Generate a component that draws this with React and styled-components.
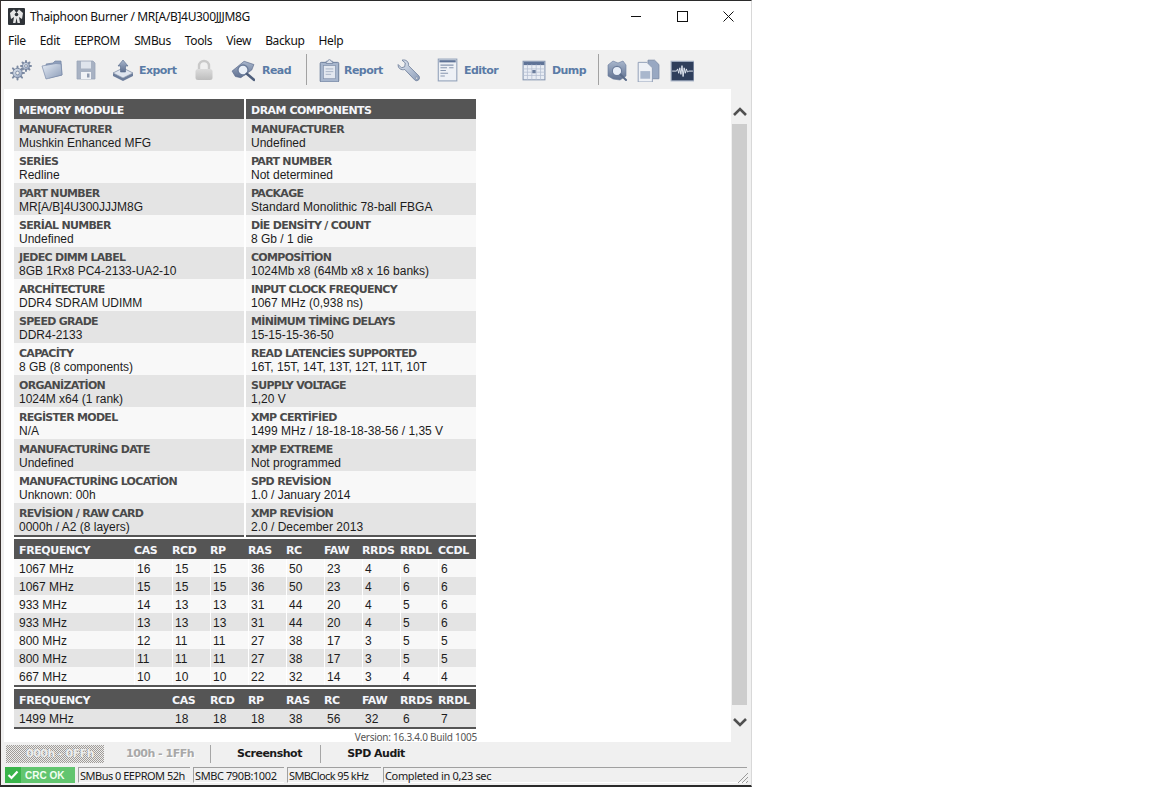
import React from "react";
import styled, { createGlobalStyle } from "styled-components";

const GlobalStyle = createGlobalStyle`
  html, body {
    margin: 0;
    padding: 0;
    background: #fff;
  }
  * {
    box-sizing: border-box;
  }
`;

const Window = styled.div`
  width: 752px;
  height: 787px;
  display: flex;
  flex-direction: column;
  background: #f0f0f0;
  border-top: 1px solid #2b2b2b;
  border-left: 1px solid #3a3230;
  border-right: 1px solid #d8d8d8;
  border-bottom: 2px solid #2b2b2b;
  overflow: hidden;
  font-family: "Liberation Sans", Arial, sans-serif;
  color: #1a1a1a;
`;

const TitleBar = styled.div`
  height: 30px;
  flex: none;
  display: flex;
  align-items: center;
  background: #fff;
  padding-left: 7px;
`;

const Title = styled.span`
  margin-left: 5px;
  font: 12px "Noto Sans", "Open Sans", sans-serif;
  letter-spacing: -0.34px;
  color: #111;
  white-space: nowrap;
`;

const WindowButtons = styled.div`
  margin-left: auto;
  display: flex;
`;

const WindowButton = styled.div`
  width: 46px;
  height: 30px;
  display: flex;
  align-items: center;
  justify-content: center;
`;

const MenuBar = styled.div`
  height: 19px;
  flex: none;
  display: flex;
  align-items: center;
  gap: 14px;
  padding-left: 7px;
  background: #fff;
  font: 12px "Noto Sans", "Open Sans", sans-serif;
  letter-spacing: -0.35px;
  color: #111;
`;

const Toolbar = styled.div`
  height: 39px;
  flex: none;
  display: flex;
  align-items: center;
  background: #f0f0f0;
`;

const ToolSlot = styled.div`
  width: ${(p) => p.$w}px;
  height: 39px;
  flex: none;
  display: flex;
  align-items: center;
  padding-left: ${(p) => p.$pad || 0}px;
`;

const ToolLabel = styled.span`
  margin: 2px 0 0 ${(p) => p.$gap || 6}px;
  font: bold 11px "DejaVu Sans", sans-serif;
  letter-spacing: -0.55px;
  color: #5a7ba6;
`;

const ToolDivider = styled.div`
  width: 1px;
  height: 31px;
  flex: none;
  background: #a2a2a2;
`;

const Middle = styled.div`
  flex: 1;
  min-height: 0;
  display: flex;
  padding-left: 3px;
`;

const Content = styled.div`
  width: 727px;
  flex: none;
  background: #fff;
  padding: 10px 0 0 10px;
  display: flex;
  flex-direction: column;
`;

const Modules = styled.div`
  width: 462px;
  display: grid;
  grid-template-columns: 230px 230px;
  column-gap: 2px;
`;

const InfoHead = styled.div`
  height: 20px;
  display: flex;
  align-items: center;
  padding: 2px 0 0 5px;
  background: #555;
  color: #f4f6fb;
  font: bold 11px "DejaVu Sans", sans-serif;
  letter-spacing: -0.5px;
`;

const InfoCell = styled.div`
  height: 32px;
  padding: 4px 0 0 5px;
  background: ${(p) => (p.$odd ? "#e4e4e4" : "#f8f8f8")};
`;

const InfoLabel = styled.div`
  height: 13px;
  font: bold 11px/14px "DejaVu Sans", sans-serif;
  letter-spacing: -0.7px;
  color: #4a4a4a;
  white-space: nowrap;
`;

const InfoValue = styled.div`
  height: 14px;
  font: 12px/14px "Liberation Sans", Arial, sans-serif;
  color: #1c1c1c;
  white-space: nowrap;
`;

const ColumnRule = styled.div`
  height: 2px;
  background: #555;
`;

const Timings = styled.div`
  width: 462px;
  margin-top: ${(p) => p.$top || 0}px;
`;

const TimingRow = styled.div`
  display: grid;
  grid-template-columns: ${(p) => p.$first}px repeat(${(p) => p.$count}, 38px);
  height: ${(p) => (p.$head ? 20 : 18)}px;
  background: ${(p) => (p.$head ? "#555" : p.$odd ? "#e4e4e4" : "#f8f8f8")};
`;

const HeadCell = styled.div`
  display: flex;
  align-items: center;
  padding: 2px 0 0 ${(p) => (p.$first ? 5 : 0)}px;
  color: #f4f6fb;
  font: bold 11px "DejaVu Sans", sans-serif;
  letter-spacing: -0.38px;
  white-space: nowrap;
`;

const TimingCell = styled.div`
  display: flex;
  align-items: center;
  padding: 2px 0 0 ${(p) => (p.$first ? 5 : p.$lined ? 2 : 3)}px;
  font-size: 12px;
  color: #1c1c1c;
  border-left: ${(p) => (p.$lined ? "1px solid #fff" : "none")};
`;

const Version = styled.div`
  width: 463px;
  height: 13px;
  margin-top: 2px;
  text-align: right;
  font: 10px/13px "Noto Sans", sans-serif;
  letter-spacing: -0.25px;
  color: #555;
  white-space: nowrap;
`;

const ScrollTrack = styled.div`
  width: 20px;
  flex: none;
  display: flex;
  flex-direction: column;
  align-items: center;
  background: #f0f0f0;
`;

const ScrollArrow = styled.div`
  height: ${(p) => p.$h}px;
  padding-top: ${(p) => p.$top || 0}px;
  margin-left: -2px;
  display: flex;
  align-items: center;
  justify-content: center;
  flex: none;
`;

const ScrollThumb = styled.div`
  width: 15px;
  height: 581px;
  flex: none;
  margin-left: -4px;
  background: #cdcdcd;
`;

const TabBar = styled.div`
  height: 23px;
  flex: none;
  display: flex;
  align-items: center;
  padding-left: 5px;
  background: #f0f0f0;
`;

const Tab = styled.div`
  width: ${(p) => p.$w}px;
  height: 18px;
  flex: none;
  display: flex;
  align-items: center;
  justify-content: center;
  padding-left: ${(p) => p.$pad || 0}px;
  font: bold 11px "DejaVu Sans", sans-serif;
  letter-spacing: -0.5px;
  color: ${(p) => (p.$off ? "#a8a8a8" : "#1a1a1a")};
  ${(p) =>
    p.$active &&
    `background: repeating-conic-gradient(#a09c98 0 25%, #ececec 0 50%) 0 0 / 2px 2px;
     color: #ededed;
     text-shadow: 0 0 1px #8e8e8e;`}
  ${(p) => p.$off && !p.$active && "text-shadow: 1px 1px 0 #fff;"}
  ${(p) => p.$rule && "border-right: 1px solid #a6a6a6;"}
`;

const StatusBar = styled.div`
  height: 20px;
  flex: none;
  display: flex;
  align-items: center;
  padding-left: 4px;
  background: #f0f0f0;
`;

const CrcBadge = styled.div`
  width: 70px;
  height: 16px;
  flex: none;
  display: flex;
  background: #62c56f;
  color: #f2fff2;
  font: bold 10px "Liberation Sans", sans-serif;
`;

const CrcCheck = styled.div`
  width: 16px;
  flex: none;
  display: flex;
  align-items: center;
  justify-content: center;
  background: #39b44a;
`;

const CrcText = styled.div`
  display: flex;
  align-items: center;
  padding-left: 4px;
`;

const StatusPanel = styled.div`
  position: relative;
  width: ${(p) => p.$w}px;
  height: 16px;
  flex: none;
  margin-left: ${(p) => p.$gap}px;
  padding-left: 1px;
  display: flex;
  align-items: center;
  border-top: 1px solid #a0a0a0;
  border-left: 1px solid #a0a0a0;
  border-bottom: 1px solid #fff;
  font: 11px "Noto Sans", "Open Sans", sans-serif;
  letter-spacing: ${(p) => p.$track}px;
  color: #1a1a1a;
  white-space: nowrap;
`;

const Grip = styled.svg`
  position: absolute;
  right: -1px;
  bottom: -1px;
`;

/* toolbar drawings */
const Defs = () => (
  <svg width="0" height="0" style={{ position: "absolute" }}>
    <defs>
      <linearGradient id="steel" x1="0" y1="0" x2="1" y2="1">
        <stop offset="0" stopColor="#e6ecf5" />
        <stop offset="1" stopColor="#8b9cb8" />
      </linearGradient>
      <linearGradient id="steelDark" x1="0" y1="0" x2="0" y2="1">
        <stop offset="0" stopColor="#a9b7cd" />
        <stop offset="1" stopColor="#5f7090" />
      </linearGradient>
      <linearGradient id="lockBody" x1="0" y1="0" x2="0" y2="1">
        <stop offset="0" stopColor="#dcdcdc" />
        <stop offset="1" stopColor="#bdbdbd" />
      </linearGradient>
    </defs>
  </svg>
);

const Icon = ({ size = 22, children }) => (
  <svg width={size} height={size} viewBox="0 0 22 22">
    {children}
  </svg>
);

const gearPath = (cx, cy, r) => {
  const out = [];
  for (let i = 0; i < 8; i++) {
    const a = (i * Math.PI) / 4;
    const x1 = cx + Math.cos(a) * (r * 0.72);
    const y1 = cy + Math.sin(a) * (r * 0.72);
    const x2 = cx + Math.cos(a) * r;
    const y2 = cy + Math.sin(a) * r;
    out.push(`M${x1.toFixed(1)} ${y1.toFixed(1)}L${x2.toFixed(1)} ${y2.toFixed(1)}`);
  }
  return out.join("");
};

const Gear = ({ cx, cy, r }) => (
  <g>
    <path d={gearPath(cx, cy, r)} stroke="#7d8ba3" strokeWidth="2" strokeLinecap="round" />
    <circle cx={cx} cy={cy} r={r * 0.72} fill="url(#steel)" stroke="#6f7e98" strokeWidth="0.8" />
    <circle cx={cx} cy={cy} r={r * 0.28} fill="#f0f0f0" stroke="#6f7e98" strokeWidth="0.7" />
  </g>
);

const GearsIcon = () => (
  <Icon>
    <Gear cx={7.5} cy={14} r={6.5} />
    <Gear cx={16} cy={7} r={5} />
  </Icon>
);

const FolderIcon = () => (
  <Icon>
    <path d="M5 5 L12 4 L14 2 L20 2 L21 16 L8 19 Z" fill="#8e9fbc" stroke="#7384a2" strokeWidth="0.7" />
    <path d="M1 7 L15 4.5 L20 5 L21 16 L5 20 Z" fill="url(#steel)" stroke="#7c8cab" strokeWidth="0.7" />
  </Icon>
);

const DiskIcon = () => (
  <Icon>
    <path d="M2 2 H18 L20 4 V20 H2 Z" fill="#a8b2c3" stroke="#9aa5b8" strokeWidth="0.8" />
    <rect x="6" y="2.5" width="10" height="7" fill="#dfe4ec" />
    <rect x="6" y="13" width="10" height="7" fill="#f0f2f6" />
    <rect x="12" y="14.5" width="2.5" height="4" fill="#8f9bb0" />
  </Icon>
);

const ExportIcon = () => (
  <Icon>
    <path d="M1 14 L11 19 L21 14 L21 17 L11 22 L1 17 Z" fill="#6d7e9c" />
    <path d="M1 14 L11 9 L21 14 L11 19 Z" fill="#dfe5ef" stroke="#75859f" strokeWidth="0.7" />
    <path d="M11 1 L16 7 H13.5 V13 H8.5 V7 H6 Z" fill="url(#steelDark)" stroke="#566a8c" strokeWidth="0.6" />
  </Icon>
);

const LockIcon = () => (
  <Icon>
    <path d="M6 11 V7 a5 5 0 0 1 10 0 V11" fill="none" stroke="#c9c9c9" strokeWidth="2.4" />
    <rect x="2.5" y="10" width="17" height="11" rx="2.5" fill="url(#lockBody)" />
  </Icon>
);

const ReadIcon = () => (
  <Icon size={24}>
    <path d="M1 12 L12 3 L21 6 L19 11 L9 18 L4 17 Z" fill="url(#steelDark)" stroke="#59698a" strokeWidth="0.6" />
    <circle cx="11" cy="11" r="4.6" fill="#eaf0f8" stroke="#6a7b9a" strokeWidth="1.2" />
    <path d="M14.5 14.5 L21 20" stroke="#4f5f7c" strokeWidth="2.4" strokeLinecap="round" />
  </Icon>
);

const ReportIcon = () => (
  <Icon size={24}>
    <rect x="2" y="4" width="17" height="18" rx="1" fill="#a7b6cd" stroke="#6c7d9b" strokeWidth="0.9" />
    <rect x="5" y="7" width="11" height="12" fill="#e3e8f0" stroke="#8190aa" strokeWidth="0.6" />
    <path d="M7.5 5 V3 H9 a1.5 1.5 0 0 1 3 0 H13.5 V5 Z" fill="#dfe5ee" stroke="#6c7d9b" strokeWidth="0.7" />
    <path d="M7 10 H14 M7 12.5 H14 M7 15 H12" stroke="#a3afc3" strokeWidth="0.8" />
  </Icon>
);

const WrenchIcon = () => (
  <Icon size={24}>
    <path
      d="M2 6 L5 9 L8 8 L8.5 4.5 L5.5 2 C9 1 12 3.5 11.5 7 L21 16.5 C22 18 21.5 20 20 20.5 C19 21 18 21 17 20 L8 10.5 C5 11.5 1.5 9.5 2 6 Z"
      fill="url(#steel)"
      stroke="#6f7f9b"
      strokeWidth="0.8"
    />
    <circle cx="19" cy="18.5" r="1" fill="#f0f0f0" stroke="#6f7f9b" strokeWidth="0.5" />
  </Icon>
);

const EditorIcon = () => (
  <Icon size={24}>
    <rect x="3" y="1" width="17" height="20" fill="#eef1f6" stroke="#93a2ba" strokeWidth="1" />
    <rect x="4" y="2" width="15" height="2" fill="#5f7397" />
    <path d="M5 6.5 H17 M5 9 H11 M13 9 H17 M5 11.5 H10 M5 14 H12 M5 16.5 H9" stroke="#8897b0" strokeWidth="1" />
  </Icon>
);

const DumpIcon = () => (
  <Icon size={24}>
    <rect x="1" y="3" width="20" height="17" fill="#e9edf4" stroke="#8a99b3" strokeWidth="1" />
    <rect x="1.5" y="3.5" width="19" height="3" fill="#5f7397" />
    <path d="M1 10 H21 M1 13 H21 M1 16 H21 M5 6 V20 M9 6 V20 M13 6 V20 M17 6 V20" stroke="#b4bfd1" strokeWidth="0.7" />
    <rect x="9.5" y="11" width="3" height="3" fill="#6a7c9c" />
  </Icon>
);

const ScanIcon = () => (
  <Icon>
    <path d="M2 6 L7 2 L12 4 L17 2 L20 6 V17 L14 21 L7 20 L2 17 Z" fill="url(#steelDark)" stroke="#66789a" strokeWidth="0.6" />
    <circle cx="11" cy="12" r="4.6" fill="#e8eef8" stroke="#6a7b9a" strokeWidth="1.1" />
    <path d="M14.5 15.5 L20 21" stroke="#5b6c8a" strokeWidth="2" strokeLinecap="round" />
  </Icon>
);

const CopyIcon = () => (
  <Icon size={24}>
    <path d="M11 2 H17 L21 6 V19 H11 Z" fill="#98a8c2" stroke="#7b8ba7" strokeWidth="0.8" />
    <path d="M2 4 H10 L15 9 V22 H2 Z" fill="#eef1f6" stroke="#8796b0" strokeWidth="0.8" />
    <rect x="4" y="12" width="9" height="7" fill="#a9b7cd" />
  </Icon>
);

const WaveIcon = () => (
  <Icon size={24}>
    <rect x="1" y="3" width="21" height="18" fill="#2f3f5c" stroke="#a9b5c8" strokeWidth="1" />
    <path d="M2 12 H6 L7 10 L8 14 L9 9 L10 15 L11 7 L12 17 L13 9 L14 14 L15 10 L16 13 L17 12 H21" stroke="#dfe6f0" strokeWidth="0.9" fill="none" />
  </Icon>
);

const AppLogo = () => (
  <svg width="17" height="17" viewBox="0 0 17 17">
    <rect width="17" height="17" rx="1" fill="#2e3338" />
    <path d="M2 5 L6 1.5 L8.5 5 L11 1.5 L15 5 L14 11 L11 9 L12 15 H9.5 L8.5 10 L7.5 15 H5 L6 9 L3 11 Z" fill="#e6e6e6" />
    <circle cx="8.5" cy="6.5" r="1.8" fill="#2e3338" />
  </svg>
);

const leftInfo = [
  ["MANUFACTURER", "Mushkin Enhanced MFG"],
  ["SERİES", "Redline"],
  ["PART NUMBER", "MR[A/B]4U300JJJM8G"],
  ["SERİAL NUMBER", "Undefined"],
  ["JEDEC DIMM LABEL", "8GB 1Rx8 PC4-2133-UA2-10"],
  ["ARCHİTECTURE", "DDR4 SDRAM UDIMM"],
  ["SPEED GRADE", "DDR4-2133"],
  ["CAPACİTY", "8 GB (8 components)"],
  ["ORGANİZATİON", "1024M x64 (1 rank)"],
  ["REGİSTER MODEL", "N/A"],
  ["MANUFACTURİNG DATE", "Undefined"],
  ["MANUFACTURİNG LOCATİON", "Unknown: 00h"],
  ["REVİSİON / RAW CARD", "0000h / A2 (8 layers)"],
];

const rightInfo = [
  ["MANUFACTURER", "Undefined"],
  ["PART NUMBER", "Not determined"],
  ["PACKAGE", "Standard Monolithic 78-ball FBGA"],
  ["DİE DENSİTY / COUNT", "8 Gb / 1 die"],
  ["COMPOSİTİON", "1024Mb x8 (64Mb x8 x 16 banks)"],
  ["INPUT CLOCK FREQUENCY", "1067 MHz (0,938 ns)"],
  ["MİNİMUM TİMİNG DELAYS", "15-15-15-36-50"],
  ["READ LATENCİES SUPPORTED", "16T, 15T, 14T, 13T, 12T, 11T, 10T"],
  ["SUPPLY VOLTAGE", "1,20 V"],
  ["XMP CERTİFİED", "1499 MHz / 18-18-18-38-56 / 1,35 V"],
  ["XMP EXTREME", "Not programmed"],
  ["SPD REVİSİON", "1.0 / January 2014"],
  ["XMP REVİSİON", "2.0 / December 2013"],
];

const jedecHead = ["FREQUENCY", "CAS", "RCD", "RP", "RAS", "RC", "FAW", "RRDS", "RRDL", "CCDL"];
const jedecRows = [
  ["1067 MHz", 16, 15, 15, 36, 50, 23, 4, 6, 6],
  ["1067 MHz", 15, 15, 15, 36, 50, 23, 4, 6, 6],
  ["933 MHz", 14, 13, 13, 31, 44, 20, 4, 5, 6],
  ["933 MHz", 13, 13, 13, 31, 44, 20, 4, 5, 6],
  ["800 MHz", 12, 11, 11, 27, 38, 17, 3, 5, 5],
  ["800 MHz", 11, 11, 11, 27, 38, 17, 3, 5, 5],
  ["667 MHz", 10, 10, 10, 22, 32, 14, 3, 4, 4],
];
const xmpHead = ["FREQUENCY", "CAS", "RCD", "RP", "RAS", "RC", "FAW", "RRDS", "RRDL"];
const xmpRow = ["1499 MHz", 18, 18, 18, 38, 56, 32, 6, 7];

const tools = [
  { w: 39, pad: 9, icon: <GearsIcon /> },
  { w: 33, pad: 1, icon: <FolderIcon /> },
  { w: 37, pad: 2, icon: <DiskIcon /> },
  { w: 80, pad: 2, icon: <ExportIcon />, label: "Export", gap: 5 },
  { w: 40, pad: 3, icon: <LockIcon /> },
  { w: 76, pad: 1, icon: <ReadIcon />, label: "Read", gap: 7 },
];

const tools2 = [
  { w: 89, pad: 11, icon: <ReportIcon />, label: "Report", gap: 2 },
  { w: 38, pad: 0, icon: <WrenchIcon /> },
  { w: 87, pad: 1, icon: <EditorIcon />, label: "Editor", gap: 5 },
  { w: 77, pad: 1, icon: <DumpIcon />, label: "Dump", gap: 6 },
];

const tools3 = [
  { w: 37, pad: 7, icon: <ScanIcon /> },
  { w: 34, pad: 0, icon: <CopyIcon /> },
  { w: 30, pad: 0, icon: <WaveIcon /> },
];

const renderTool = (t, i) => (
  <ToolSlot key={i} $w={t.w} $pad={t.pad}>
    {t.icon}
    {t.label && <ToolLabel $gap={t.gap}>{t.label}</ToolLabel>}
  </ToolSlot>
);

export default function App() {
  return (
    <>
      <GlobalStyle />
      <Defs />
      <Window>
        <TitleBar>
          <AppLogo />
          <Title>Thaiphoon Burner / MR[A/B]4U300JJJM8G</Title>
          <WindowButtons>
            <WindowButton>
              <svg width="11" height="11" viewBox="0 0 11 11">
                <path d="M0 5.5 H10" stroke="#111" strokeWidth="1" />
              </svg>
            </WindowButton>
            <WindowButton>
              <svg width="11" height="11" viewBox="0 0 11 11">
                <rect x="0.5" y="0.5" width="10" height="10" fill="none" stroke="#111" strokeWidth="1" />
              </svg>
            </WindowButton>
            <WindowButton>
              <svg width="11" height="11" viewBox="0 0 11 11">
                <path d="M0.5 0.5 L10.5 10.5 M10.5 0.5 L0.5 10.5" stroke="#111" strokeWidth="1" />
              </svg>
            </WindowButton>
          </WindowButtons>
        </TitleBar>

        <MenuBar>
          {["File", "Edit", "EEPROM", "SMBus", "Tools", "View", "Backup", "Help"].map((m) => (
            <span key={m}>{m}</span>
          ))}
        </MenuBar>

        <Toolbar>
          {tools.map(renderTool)}
          <ToolDivider />
          {tools2.map(renderTool)}
          <ToolDivider />
          {tools3.map(renderTool)}
        </Toolbar>

        <Middle>
          <Content>
            <Modules>
              <InfoHead>MEMORY MODULE</InfoHead>
              <InfoHead>DRAM COMPONENTS</InfoHead>
              {leftInfo.map((row, i) => (
                <React.Fragment key={row[0]}>
                  <InfoCell $odd={i % 2 === 0}>
                    <InfoLabel>{row[0]}</InfoLabel>
                    <InfoValue>{row[1]}</InfoValue>
                  </InfoCell>
                  <InfoCell $odd={i % 2 === 0}>
                    <InfoLabel>{rightInfo[i][0]}</InfoLabel>
                    <InfoValue>{rightInfo[i][1]}</InfoValue>
                  </InfoCell>
                </React.Fragment>
              ))}
              <ColumnRule />
              <ColumnRule />
            </Modules>

            <Timings $top={2}>
              <TimingRow $head $first={120} $count={9}>
                {jedecHead.map((h, i) => (
                  <HeadCell key={h} $first={i === 0}>{h}</HeadCell>
                ))}
              </TimingRow>
              {jedecRows.map((row, r) => (
                <TimingRow key={r} $first={120} $count={9} $odd={r % 2 === 1}>
                  {row.map((v, i) => (
                    <TimingCell key={i} $first={i === 0} $lined={i > 0}>{v}</TimingCell>
                  ))}
                </TimingRow>
              ))}
              <ColumnRule />
            </Timings>

            <Timings $top={2}>
              <TimingRow $head $first={158} $count={8}>
                {xmpHead.map((h, i) => (
                  <HeadCell key={h} $first={i === 0}>{h}</HeadCell>
                ))}
              </TimingRow>
              <TimingRow $first={158} $count={8} $odd>
                {xmpRow.map((v, i) => (
                  <TimingCell key={i} $first={i === 0}>{v}</TimingCell>
                ))}
              </TimingRow>
              <ColumnRule />
            </Timings>

            <Version>Version: 16.3.4.0 Build 1005</Version>
          </Content>
          <ScrollTrack>
            <ScrollArrow $h={35} $top={10}>
              <svg width="16" height="16" viewBox="0 0 16 16">
                <path d="M2 11 L8 5 L14 11" fill="none" stroke="#505050" strokeWidth="2.6" />
              </svg>
            </ScrollArrow>
            <ScrollThumb />
            <ScrollArrow $h={34}>
              <svg width="16" height="16" viewBox="0 0 16 16">
                <path d="M2 5 L8 11 L14 5" fill="none" stroke="#505050" strokeWidth="2.6" />
              </svg>
            </ScrollArrow>
          </ScrollTrack>
        </Middle>

        <TabBar>
          <Tab $w={98} $off $active $pad={10}>000h - 0FFh</Tab>
          <Tab $w={107} $off $rule $pad={6}>100h - 1FFh</Tab>
          <Tab $w={110} $rule $pad={8}>Screenshot</Tab>
          <Tab $w={110}>SPD Audit</Tab>
        </TabBar>

        <StatusBar>
          <CrcBadge>
            <CrcCheck>
              <svg width="12" height="10" viewBox="0 0 12 10">
                <path d="M1.5 5 L4.5 8 L10.5 1.5" fill="none" stroke="#fff" strokeWidth="2.2" />
              </svg>
            </CrcCheck>
            <CrcText>CRC OK</CrcText>
          </CrcBadge>
          <StatusPanel $gap={3} $w={112} $track={-0.5}>SMBus 0 EEPROM 52h</StatusPanel>
          <StatusPanel $gap={3} $w={91} $track={-0.4}>SMBC 790B:1002</StatusPanel>
          <StatusPanel $gap={3} $w={94} $track={-0.6}>SMBClock 95 kHz</StatusPanel>
          <StatusPanel $gap={2} $w={364} $track={-0.35}>
            Completed in 0,23 sec
            <Grip width="12" height="12" viewBox="0 0 12 12">
              <path d="M2 12 L12 2 M6 12 L12 6 M10 12 L12 10" stroke="#9a9a9a" strokeWidth="1" />
            </Grip>
          </StatusPanel>
        </StatusBar>
      </Window>
    </>
  );
}
